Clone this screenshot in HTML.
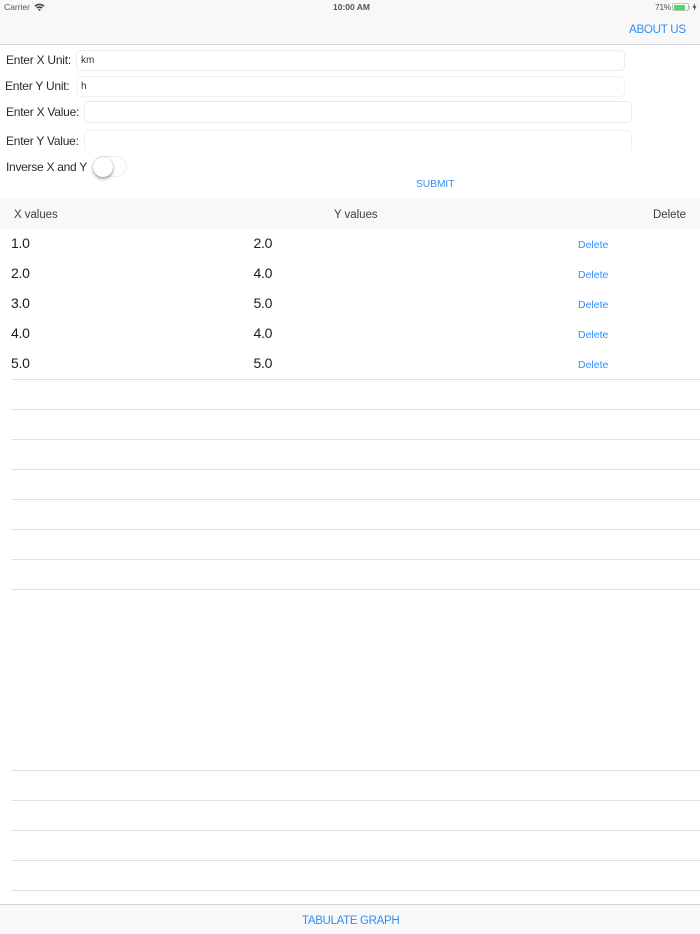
<!DOCTYPE html>
<html>
<head>
<meta charset="utf-8">
<style>
html,body{margin:0;padding:0;background:#fff}
#p{position:relative;width:700px;height:934px;overflow:hidden;background:#fff;font-family:"Liberation Sans",sans-serif;color:#222}
#p div{position:absolute;box-sizing:border-box}
.t{white-space:nowrap;line-height:16px;height:16px}
.l{font-size:12px;letter-spacing:-.24px;color:#2a2a2a}
.f{border:1.5px solid #ebebeb;border-radius:5px;background:#fff}
.n{font-size:14px;letter-spacing:-.3px;color:#1c1c1c}
.d{font-size:10.5px;color:#2f8ffb;left:578px}
.h{font-size:11.5px;letter-spacing:-.05px;color:#3d3d3d}
.r{left:11px;right:0;height:1px;background:#e0e0e0}
.b{color:#2f8ffb}
.s{font-size:8.5px;color:#555}
</style>
</head>
<body>
<div id="p">
<div style="left:0;top:0;width:700px;height:45px;background:#f8f8f8;border-bottom:1px solid #d4d4d4"></div>
<div class="t s" style="left:4px;top:-1px">Carrier</div>
<svg style="position:absolute;left:34px;top:3px" width="11" height="8" viewBox="0 0 11 8"><path d="M0.4 2.6C3.2 0 7.8 0 10.6 2.6L9.5 3.8C7.2 1.8 3.8 1.8 1.5 3.8Z M2.2 4.5C4 2.9 7 2.9 8.8 4.5L7.7 5.6C6.4 4.6 4.6 4.6 3.3 5.6Z M4 6.4C4.9 5.7 6.1 5.7 7 6.4L5.5 8Z" fill="#444"/></svg>
<div class="t s" style="left:333px;top:-1px;font-weight:bold;color:#555">10:00 AM</div>
<div class="t s" style="left:655px;top:-1px;letter-spacing:-.4px">71%</div>
<div style="left:672px;top:3px;width:17px;height:8px;border:1px solid #c0c0c0;border-radius:2px;background:#fff"></div>
<div style="left:673.5px;top:4.5px;width:11px;height:5px;background:#4cd964"></div>
<div style="left:689px;top:5.5px;width:1px;height:3px;background:#c0c0c0"></div>
<svg style="position:absolute;left:692px;top:3px" width="5" height="8" viewBox="0 0 5 8"><path d="M3 0L0.5 4.5H2.2L1.8 8L4.5 3.3H2.7Z" fill="#444"/></svg>
<div class="t b" style="left:629px;top:22px;font-size:11.6px;letter-spacing:-.28px">ABOUT US</div>

<div class="t l" style="left:6px;top:52px">Enter X Unit:</div>
<div class="f" style="left:76px;top:49.5px;width:549px;height:21px"></div>
<div class="t" style="left:81px;top:53px;font-size:10px;color:#333">km</div>
<div class="t l" style="left:5px;top:78px">Enter Y Unit:</div>
<div class="f" style="left:76px;top:75.5px;width:549px;height:21px;border-color:#f2f2f2"></div>
<div class="t" style="left:81px;top:79px;font-size:10px;color:#333">h</div>
<div class="t l" style="left:6px;top:104px">Enter X Value:</div>
<div class="f" style="left:84px;top:101px;width:548px;height:21.5px"></div>
<div class="t l" style="left:6px;top:133px">Enter Y Value:</div>
<div style="left:84px;top:130px;width:548px;height:21px;overflow:hidden"><div class="f" style="left:0;top:0;width:548px;height:28px;border-color:#f0f0f0"></div></div>
<div class="t l" style="left:6px;top:159px;letter-spacing:-.28px">Inverse X and Y</div>
<div style="left:93px;top:156px;width:34px;height:21px;border:1px solid #ebebeb;border-radius:11px;background:#fff"></div>
<div style="left:93px;top:156.5px;width:20px;height:20px;border-radius:50%;background:#fff;box-shadow:0 2px 3px rgba(0,0,0,.35),0 0 1px rgba(0,0,0,.35)"></div>
<div class="t b" style="left:416px;top:177px;font-size:10.2px">SUBMIT</div>

<div style="left:0;top:199px;width:700px;height:30px;background:#f8f8f8"></div>
<div class="t h" style="left:14px;top:207px">X values</div>
<div class="t h" style="left:334px;top:207px">Y values</div>
<div class="t h" style="left:653px;top:207px">Delete</div>

<div class="t n" style="left:11px;top:235px">1.0</div><div class="t n" style="left:253.5px;top:235px">2.0</div><div class="t d" style="top:237px">Delete</div>
<div class="t n" style="left:11px;top:265px">2.0</div><div class="t n" style="left:253.5px;top:265px">4.0</div><div class="t d" style="top:267px">Delete</div>
<div class="t n" style="left:11px;top:295px">3.0</div><div class="t n" style="left:253.5px;top:295px">5.0</div><div class="t d" style="top:297px">Delete</div>
<div class="t n" style="left:11px;top:325px">4.0</div><div class="t n" style="left:253.5px;top:325px">4.0</div><div class="t d" style="top:327px">Delete</div>
<div class="t n" style="left:11px;top:355px">5.0</div><div class="t n" style="left:253.5px;top:355px">5.0</div><div class="t d" style="top:357px">Delete</div>

<div class="r" style="top:379px"></div>
<div class="r" style="top:409px"></div>
<div class="r" style="top:439px"></div>
<div class="r" style="top:469px"></div>
<div class="r" style="top:499px"></div>
<div class="r" style="top:529px"></div>
<div class="r" style="top:559px"></div>
<div class="r" style="top:589px"></div>
<div class="r" style="top:770px"></div>
<div class="r" style="top:800px"></div>
<div class="r" style="top:830px"></div>
<div class="r" style="top:860px"></div>
<div class="r" style="top:890px"></div>

<div style="left:0;top:904px;width:700px;height:30px;background:#f8f8f8;border-top:1px solid #d4d4d4"></div>
<div class="t b" style="left:302px;top:913px;font-size:11.5px;letter-spacing:-.32px">TABULATE GRAPH</div>
</div>
</body>
</html>
